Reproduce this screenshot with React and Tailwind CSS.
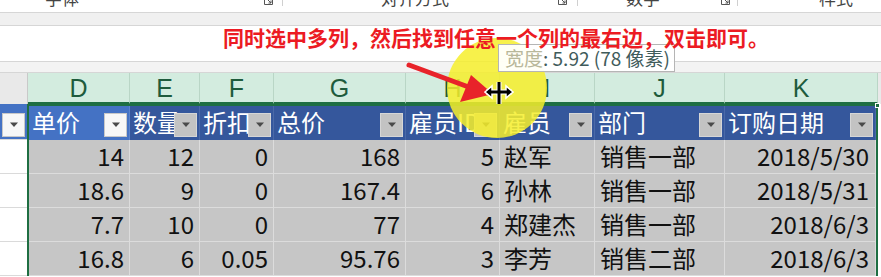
import React from 'react';

const font = "font-['Noto_Sans_CJK_SC','Noto_Sans',sans-serif]";

const cols = [
  { key: 'D', w: 'w-[101px]', head: '单价', active: true },
  { key: 'E', w: 'w-[70px]', head: '数量' },
  { key: 'F', w: 'w-[74px]', head: '折扣' },
  { key: 'G', w: 'w-[132px]', head: '总价' },
  { key: 'H', w: 'w-[94px]', head: '雇员ID' },
  { key: 'I', w: 'w-[95px]', head: '雇员' },
  { key: 'J', w: 'w-[130px]', head: '部门' },
  { key: 'K', w: 'w-[151px]', head: '订购日期' },
];

const letterCols = [
  { l: 'D', w: 'w-[102px]' },
  { l: 'E', w: 'w-[70px]' },
  { l: 'F', w: 'w-[74px]' },
  { l: 'G', w: 'w-[132px]' },
  { l: 'H', w: 'w-[94px]' },
  { l: 'I', w: 'w-[95px]' },
  { l: 'J', w: 'w-[130px]' },
  { l: 'K', w: 'w-[153px]' },
];

const rows = [
  ['14', '12', '0', '168', '5', '赵军', '销售一部', '2018/5/30'],
  ['18.6', '9', '0', '167.4', '6', '孙林', '销售一部', '2018/5/31'],
  ['7.7', '10', '0', '77', '4', '郑建杰', '销售一部', '2018/6/3'],
  ['16.8', '6', '0.05', '95.76', '3', '李芳', '销售二部', '2018/6/3'],
];

function Launcher() {
  return (
    <svg width="9" height="6" viewBox="0 0 9 6" className="mt-[-1px]">
      <path d="M0.5 0 V5.5 H8.5 V0" fill="none" stroke="#555" strokeWidth="1" />
      <path d="M3 0 L7 4 M7 1.5 V4 H4.5" fill="none" stroke="#555" strokeWidth="1" />
    </svg>
  );
}

function DropBtn({ light }) {
  return (
    <div
      className={`absolute right-[2px] top-[7px] w-[23px] h-[24px] flex items-center justify-center border ${
        light ? 'bg-[#f7f7f7] border-[#c8c8c8]' : 'bg-[#c3c3c3] border-[#d6d6d6]'
      }`}
    >
      <svg width="10" height="6" viewBox="0 0 10 6">
        <path d="M1 0.5 H9 L5 5 Z" fill="#4a4a4a" />
      </svg>
    </div>
  );
}

export default function App() {
  return (
    <div className={`relative w-[881px] h-[277px] overflow-hidden bg-white ${font}`}>
      {/* ribbon group labels, cut off at top */}
      <div className="flex h-[13px] overflow-hidden border-b border-[#d6d6d6] text-[17px] leading-[17px] text-[#444]">
        <div className="w-[283px] flex items-start border-r border-[#d0d0d0] h-[6px]">
          <span className="ml-[45px] mt-[-11px]">字体</span>
          <span className="ml-auto mr-[9px]"><Launcher /></span>
        </div>
        <div className="w-[295px] flex items-start border-r border-[#d0d0d0] h-[6px]">
          <span className="ml-[98px] mt-[-11px]">对齐方式</span>
          <span className="ml-auto mr-[10px]"><Launcher /></span>
        </div>
        <div className="w-[160px] flex items-start border-r border-[#d0d0d0] h-[6px]">
          <span className="ml-[48px] mt-[-11px]">数字</span>
          <span className="ml-auto mr-[7px]"><Launcher /></span>
        </div>
        <div className="flex-1 flex items-start">
          <span className="ml-[81px] mt-[-11px]">样式</span>
        </div>
      </div>
      <div className="h-[13px] bg-[#f0f0f0] border-b border-[#d6d6d6]" />
      <div className="h-[36px] border-b border-[#d6d6d6] pl-[223px] pt-[1px]">
        <span className="relative z-20 block text-[21px] leading-[21px] font-bold text-[#ec1b23]">
          同时选中多列，然后找到任意一个列的最右边，双击即可。
        </span>
      </div>
      <div className="h-[10px] bg-[#f3f3f3]" />

      {/* column letters */}
      <div className="flex h-[32px] border-t border-[#d6d6d6] text-[25px] leading-[30px] text-[#1e5b3c]">
        <div className="w-[28px] bg-[#e9e9e9] border-r border-[#c9c9c9]" />
        {letterCols.map((c) => (
          <div
            key={c.l}
            className={`${c.w} bg-[#d3ecdf] border-r border-[#b9d6c6] border-b-2 border-b-[#1e6e42] flex justify-center font-['Liberation_Sans',sans-serif]`}
          >
            {c.l}
          </div>
        ))}
        <div className="flex-1 bg-[#e9e9e9]" />
      </div>

      {/* table */}
      <div className="flex text-[24px] text-[#111]">
        <div className="w-[27px] flex flex-col">
          <div className="relative h-[36px] bg-[#4472c4] border-b border-[#d9d9d9]">
            <div className="absolute left-[2px] top-[9px] w-[23px] h-[24px] flex items-center justify-center bg-[#f7f7f7] border border-[#c8c8c8]">
              <svg width="10" height="6" viewBox="0 0 10 6">
                <path d="M1 0.5 H9 L5 5 Z" fill="#4a4a4a" />
              </svg>
            </div>
          </div>
          {rows.map((_, i) => (
            <div key={i} className="h-[34px] border-b border-[#dadada]" />
          ))}
        </div>
        <div className="relative border-l-2 border-t-2 border-r-2 border-[#1e6e42]">
          <div className="flex h-[34px]">
            {cols.map((c) => (
              <div
                key={c.key}
                className={`relative ${c.w} overflow-hidden whitespace-nowrap pl-[3px] leading-[32px] text-white border-r ${
                  c.active ? 'bg-[#4472c4] border-[#5a83cc]' : 'bg-[#35579c] border-[#4a69a8]'
                }`}
              >
                {c.head}
                <DropBtn light={c.active} />
              </div>
            ))}
          </div>
          {rows.map((r, i) => (
            <div key={i} className="flex h-[34px] bg-[#c6c6c6] leading-[32px]">
              {r.map((v, j) => {
                const leftAlign = j === 5 || j === 6;
                return (
                  <div
                    key={j}
                    className={`${cols[j].w} border-r border-b border-[#dcdcdc] whitespace-nowrap overflow-hidden ${
                      leftAlign ? (j === 5 ? 'pl-[4px] text-left' : 'pl-[5px] text-left') : j === 7 ? 'pr-[6px] text-right' : 'pr-[5px] text-right'
                    }`}
                  >
                    {v}
                  </div>
                );
              })}
            </div>
          ))}
          <div className="absolute right-[-4px] top-[-3px] w-[5px] h-[5px] bg-[#1e6e42] border border-white" />
        </div>
        <div className="flex-1" />
      </div>

      {/* yellow cursor highlight */}
      <div className="absolute left-[447px] top-[38px] w-[100px] h-[100px] rounded-full bg-[#f6ee2c]/85" />

      {/* width tooltip */}
      <div className="absolute z-10 left-[498px] top-[44px] h-[28px] pl-[6px] pr-[4px] bg-white/95 border border-[#b5b5b5] text-[19px] leading-[26px] text-[#3f5b5b] whitespace-nowrap">
        <span className="text-[#b8b79a]">宽度</span>: 5.92 (78 像素)
      </div>

      {/* red arrow */}
      <svg className="absolute z-10 left-[400px] top-[55px]" width="100" height="50" viewBox="0 0 100 50">
        <line x1="9" y1="10" x2="74" y2="34" stroke="#e8232a" strokeWidth="5" strokeLinecap="round" />
        <path d="M93 39 L60 47 L71 20 Z" fill="#e8232a" />
      </svg>

      {/* column resize cursor */}
      <svg className="absolute z-10 left-[484px] top-[80px]" width="30" height="26" viewBox="0 0 30 26">
        <g stroke="#fff" strokeWidth="5" fill="none" strokeLinejoin="round">
          <line x1="15" y1="2" x2="15" y2="24" />
          <path d="M2 12 H28" />
        </g>
        <path d="M1 12 L8 6 V18 Z M29 12 L22 6 V18 Z" fill="#000" stroke="#fff" strokeWidth="1.5" />
        <g stroke="#000" strokeWidth="3" fill="none">
          <line x1="15" y1="2" x2="15" y2="24" />
          <line x1="5" y1="12" x2="25" y2="12" />
        </g>
      </svg>
    </div>
  );
}
